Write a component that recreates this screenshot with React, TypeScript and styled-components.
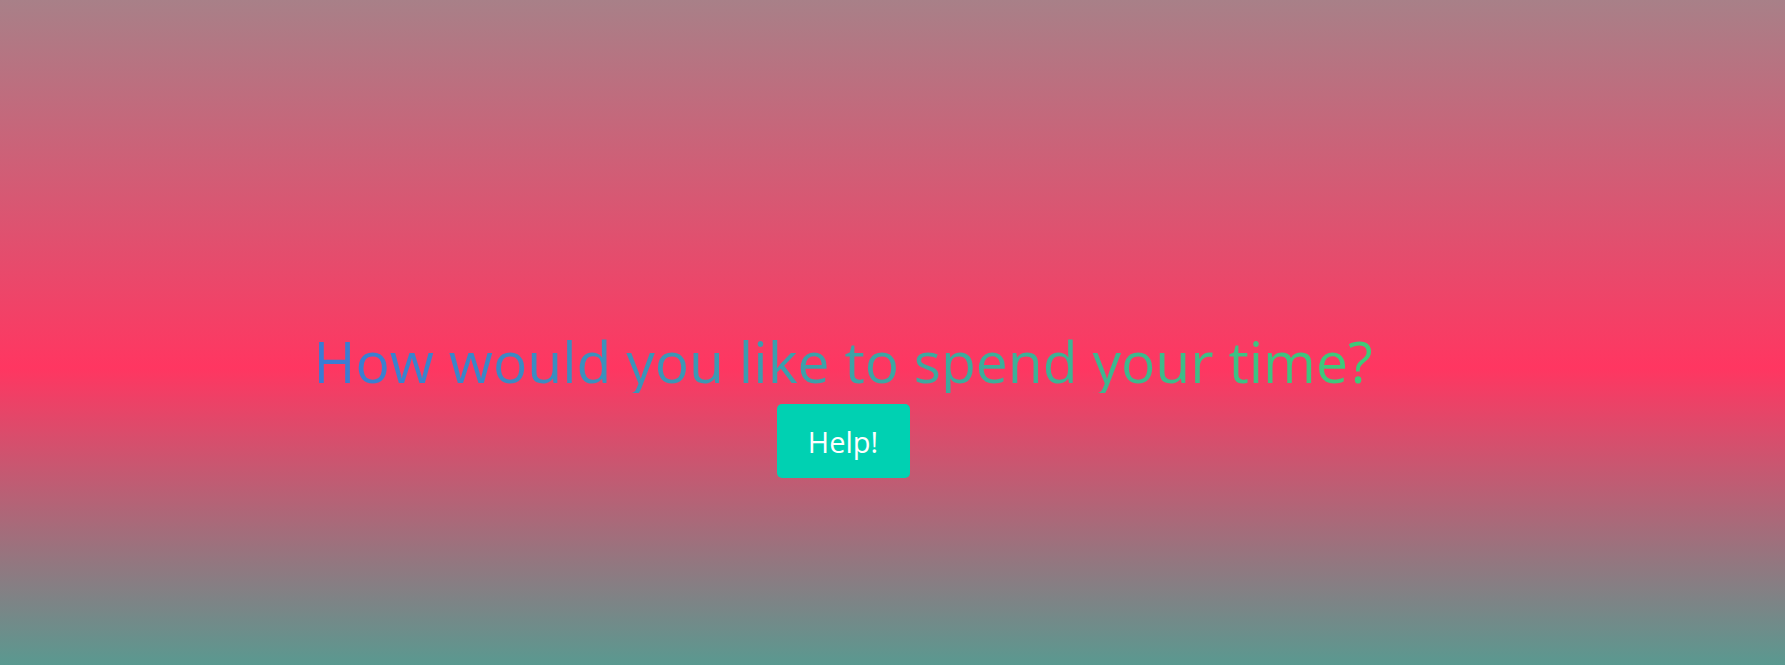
import React from "react";
import styled, { createGlobalStyle } from "styled-components";

const Global = createGlobalStyle`
  html, body { margin: 0; padding: 0; }
  body {
    font-family: "Open Sans", "Noto Sans", sans-serif;
    background: #5a9990;
  }
`;

const Hero = styled.section`
  height: 665px;
  box-sizing: border-box;
  display: flex;
  flex-direction: column;
  align-items: center;
  justify-content: center;
  padding: 142px 99px 0 0;
  background: linear-gradient(
    to bottom,
    #a88088 0%,
    #ff3661 55.3%,
    #5a9990 100%
  );
`;

const Title = styled.h1`
  margin: 0;
  font-size: 57px;
  font-weight: 400;
  line-height: 64px;
  display: inline-block;
  background: linear-gradient(to right, #3a7bd5 0%, #3ecb78 100%);
  -webkit-background-clip: text;
  background-clip: text;
  color: transparent;
`;

const HelpButton = styled.button`
  margin-top: 11px;
  width: 133px;
  height: 74px;
  border: none;
  border-radius: 5px;
  background: #00d1b2;
  color: #ffffff;
  font-family: "Open Sans", "Noto Sans", sans-serif;
  font-size: 29px;
  cursor: pointer;
`;

export default function App() {
  return (
    <>
      <Global />
      <Hero>
        <Title>How would you like to spend your time?</Title>
        <HelpButton>Help!</HelpButton>
      </Hero>
    </>
  );
}
